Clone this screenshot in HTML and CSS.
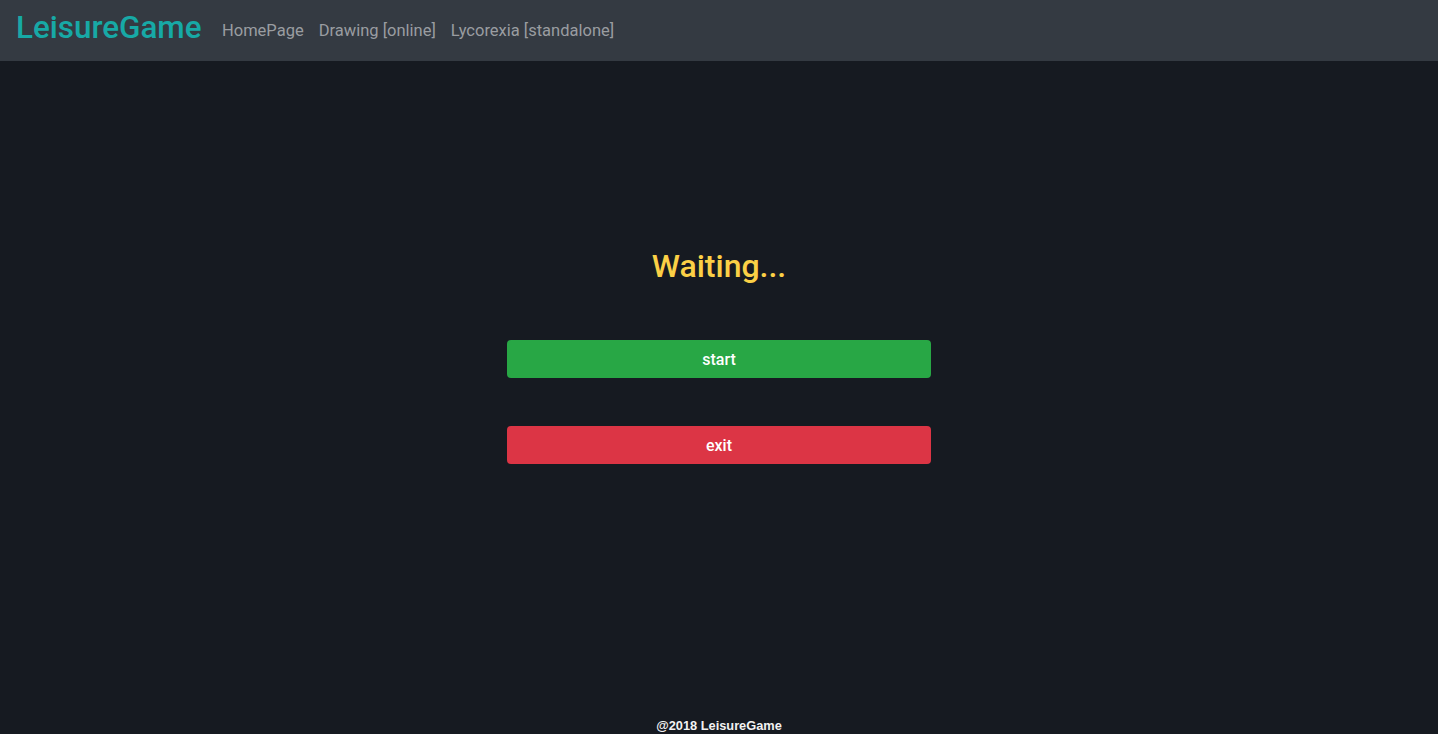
FILE: index.html
```html
<!DOCTYPE html>
<html lang="en">
<head>
<meta charset="utf-8">
<title>LeisureGame</title>
<link rel="stylesheet" href="styles.css">
</head>
<body>
<div class="page">
  <nav class="navbar">
    <a class="brand" href="#">LeisureGame</a>
    <ul class="nav">
      <li><a href="#">HomePage</a></li>
      <li><a href="#">Drawing [online]</a></li>
      <li><a href="#">Lycorexia [standalone]</a></li>
    </ul>
  </nav>
  <main class="main">
    <h2 class="status">Waiting...</h2>
    <div class="actions">
      <button class="btn btn-start">start</button>
      <button class="btn btn-exit">exit</button>
    </div>
  </main>
  <footer class="footer">@2018 LeisureGame</footer>
</div>
</body>
</html>
```
FILE: styles.css
```css
html, body {
  margin: 0;
  padding: 0;
}
body {
  background: #161a21;
  font-family: "Liberation Sans", Arial, sans-serif;
  color: #fff;
}
.page {
  min-height: 100vh;
  display: flex;
  flex-direction: column;
}
.navbar {
  height: 61px;
  background: #343a42;
  display: flex;
  align-items: center;
  padding: 0 16px;
  box-sizing: border-box;
}
.brand {
  color: #17a9a6;
  font-family: Roboto, "Liberation Sans", sans-serif;
  font-weight: 500;
  font-size: 31.4px;
  text-decoration: none;
  margin-right: 13px;
  line-height: 1;
  position: relative;
  top: -3px;
}
.nav {
  list-style: none;
  margin: 0;
  padding: 0;
  display: flex;
}
.nav a {
  display: block;
  padding: 8px 7.5px;
  color: #9a9da1;
  font-family: Roboto, "Liberation Sans", sans-serif;
  font-size: 16.5px;
  text-decoration: none;
}
.main {
  flex: 1;
  display: flex;
  flex-direction: column;
  align-items: center;
}
.status {
  margin: 186px 0 0;
  font-family: Roboto, "Liberation Sans", sans-serif;
  font-size: 32px;
  font-weight: 500;
  line-height: 38px;
  color: #fbd046;
}
.actions {
  margin-top: 55px;
  display: flex;
  flex-direction: column;
  gap: 48px;
  width: 424px;
}
.btn {
  height: 38px;
  border: none;
  border-radius: 4px;
  color: #fff;
  font-family: Roboto, "Liberation Sans", sans-serif;
  font-weight: 500;
  font-size: 16px;
  cursor: pointer;
}
.btn-start {
  background: #28a745;
}
.btn-exit {
  background: #dc3545;
}
.footer {
  text-align: center;
  font-size: 12.8px;
  font-weight: bold;
  line-height: 16px;
  padding-bottom: 0;
  color: #f2f2f2;
}
```
